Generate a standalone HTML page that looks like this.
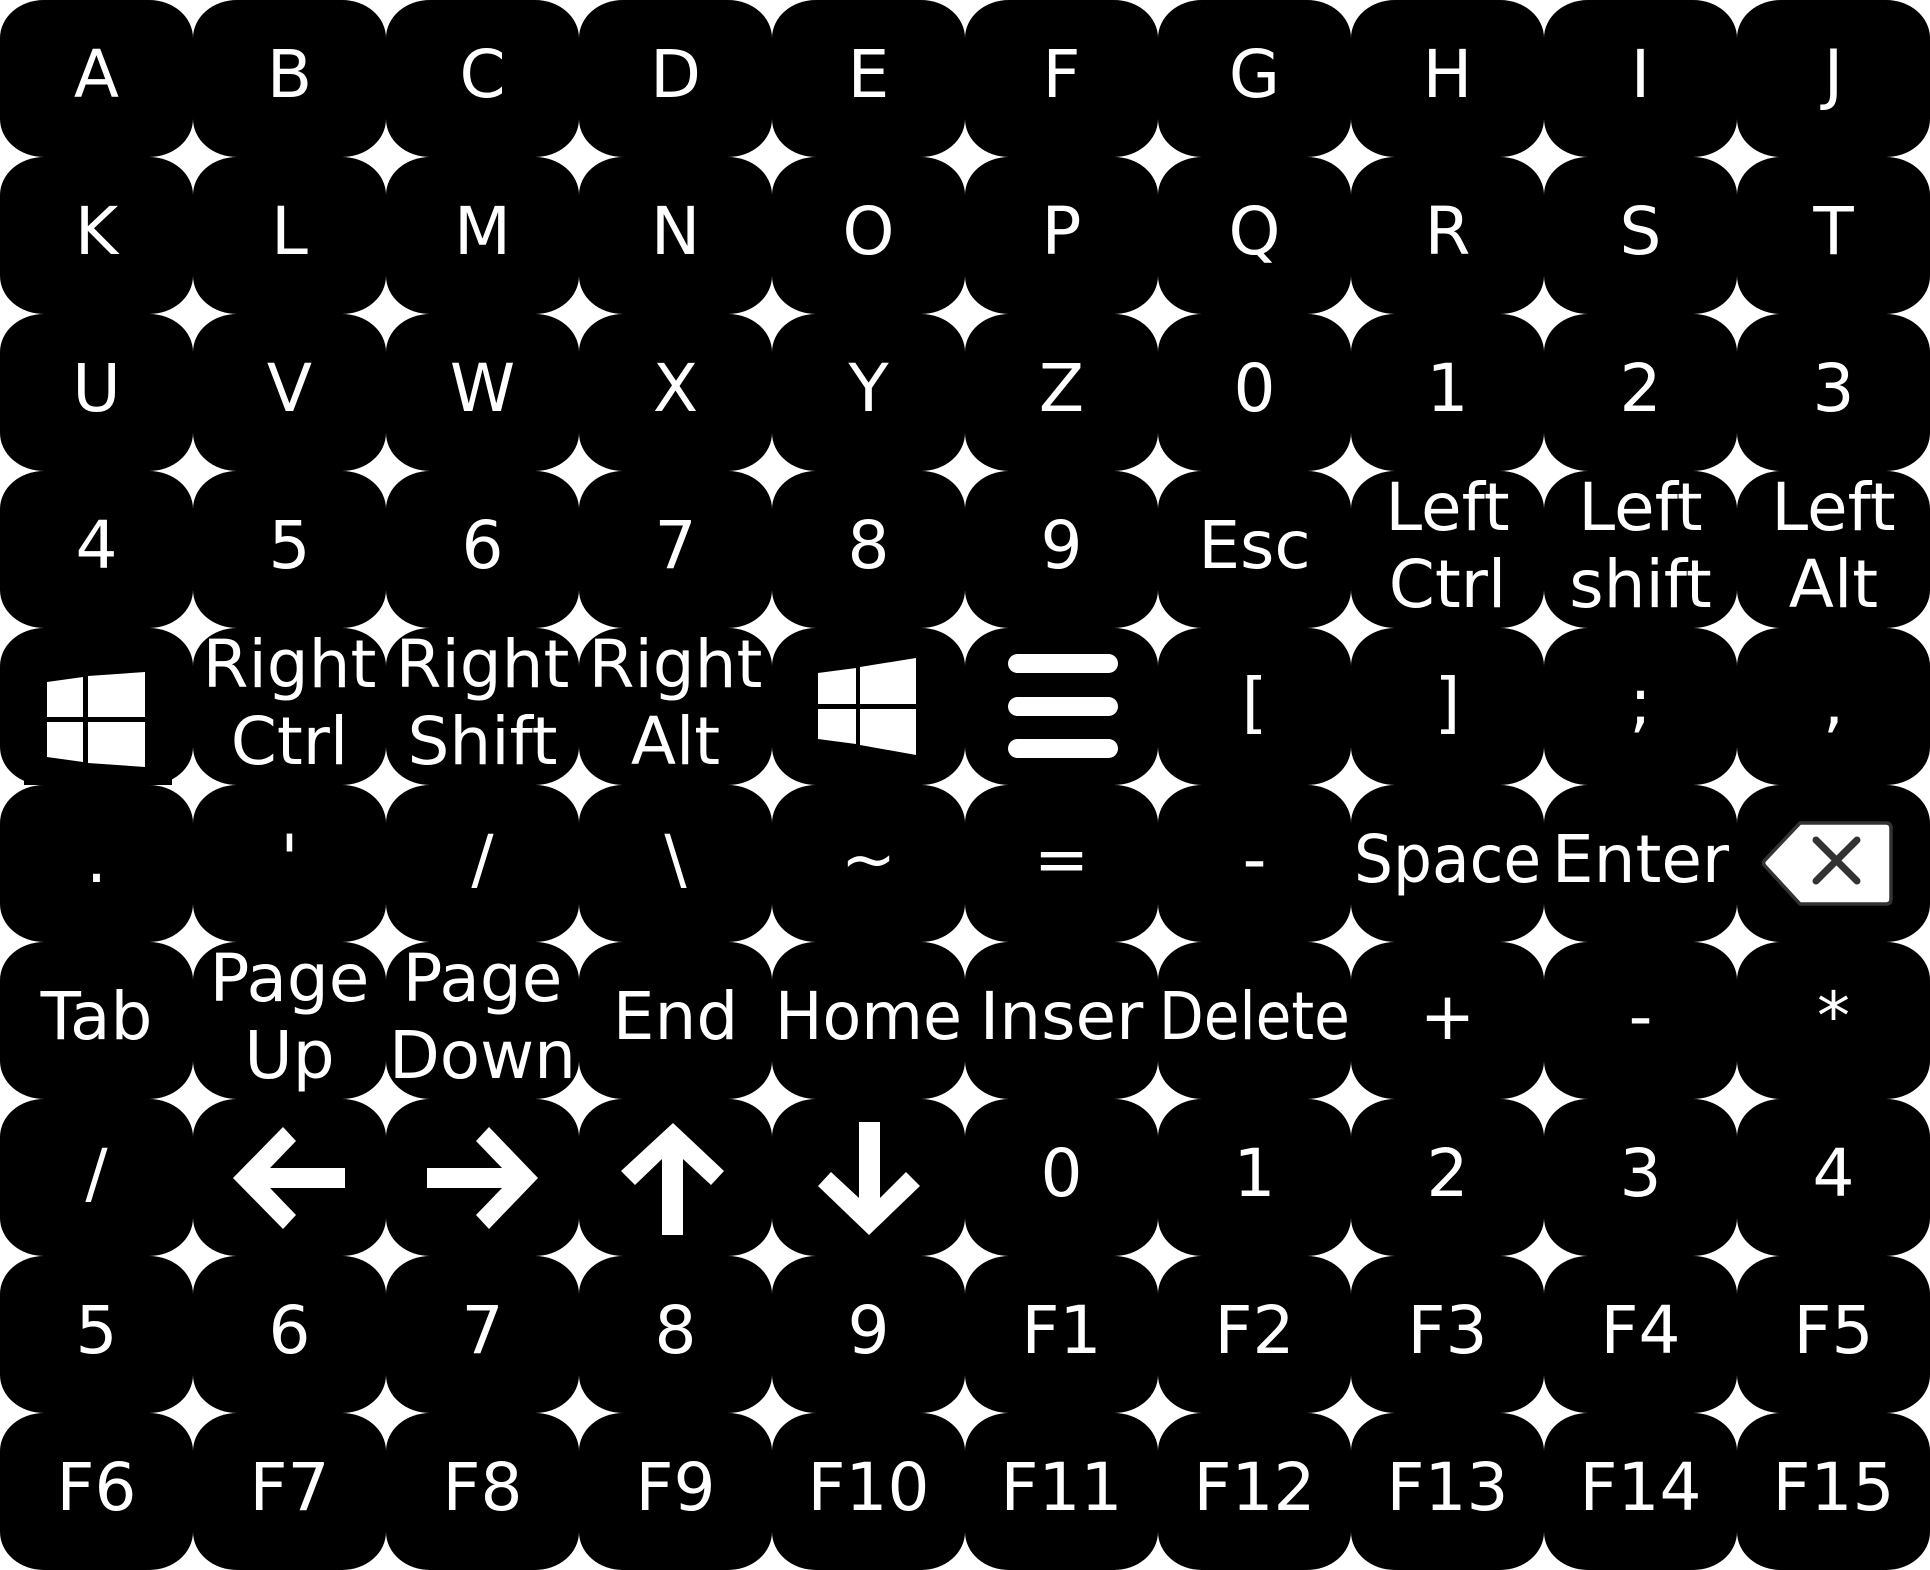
<!DOCTYPE html>
<html><head><meta charset="utf-8"><style>
html,body{margin:0;padding:0;background:#fff;}
body{width:1930px;height:1570px;position:relative;overflow:hidden;font-family:"DejaVu Sans","Liberation Sans",sans-serif;color:#fff;}
.k{position:absolute;width:193px;height:157px;background:#000;border-radius:44px/38px;}
.t{position:absolute;left:-20px;right:-20px;top:-4px;height:157px;display:flex;align-items:center;justify-content:center;text-align:center;font-size:66px;line-height:77px;white-space:nowrap;}
.t span{display:inline-block;}
svg{position:absolute;left:0;top:0;}
</style></head><body>
<div id="g">
<div class="k" style="left:0;top:0"><div class="t">A</div></div>
<div class="k" style="left:193px;top:0"><div class="t">B</div></div>
<div class="k" style="left:386px;top:0"><div class="t">C</div></div>
<div class="k" style="left:579px;top:0"><div class="t">D</div></div>
<div class="k" style="left:772px;top:0"><div class="t">E</div></div>
<div class="k" style="left:965px;top:0"><div class="t">F</div></div>
<div class="k" style="left:1158px;top:0"><div class="t">G</div></div>
<div class="k" style="left:1351px;top:0"><div class="t">H</div></div>
<div class="k" style="left:1544px;top:0"><div class="t">I</div></div>
<div class="k" style="left:1737px;top:0"><div class="t">J</div></div>
<div class="k" style="left:0;top:157px"><div class="t">K</div></div>
<div class="k" style="left:193px;top:157px"><div class="t">L</div></div>
<div class="k" style="left:386px;top:157px"><div class="t">M</div></div>
<div class="k" style="left:579px;top:157px"><div class="t">N</div></div>
<div class="k" style="left:772px;top:157px"><div class="t">O</div></div>
<div class="k" style="left:965px;top:157px"><div class="t">P</div></div>
<div class="k" style="left:1158px;top:157px"><div class="t">Q</div></div>
<div class="k" style="left:1351px;top:157px"><div class="t">R</div></div>
<div class="k" style="left:1544px;top:157px"><div class="t">S</div></div>
<div class="k" style="left:1737px;top:157px"><div class="t">T</div></div>
<div class="k" style="left:0;top:314px"><div class="t">U</div></div>
<div class="k" style="left:193px;top:314px"><div class="t">V</div></div>
<div class="k" style="left:386px;top:314px"><div class="t">W</div></div>
<div class="k" style="left:579px;top:314px"><div class="t">X</div></div>
<div class="k" style="left:772px;top:314px"><div class="t">Y</div></div>
<div class="k" style="left:965px;top:314px"><div class="t">Z</div></div>
<div class="k" style="left:1158px;top:314px"><div class="t">0</div></div>
<div class="k" style="left:1351px;top:314px"><div class="t">1</div></div>
<div class="k" style="left:1544px;top:314px"><div class="t">2</div></div>
<div class="k" style="left:1737px;top:314px"><div class="t">3</div></div>
<div class="k" style="left:0;top:471px"><div class="t">4</div></div>
<div class="k" style="left:193px;top:471px"><div class="t">5</div></div>
<div class="k" style="left:386px;top:471px"><div class="t">6</div></div>
<div class="k" style="left:579px;top:471px"><div class="t">7</div></div>
<div class="k" style="left:772px;top:471px"><div class="t">8</div></div>
<div class="k" style="left:965px;top:471px"><div class="t">9</div></div>
<div class="k" style="left:1158px;top:471px"><div class="t">Esc</div></div>
<div class="k" style="left:1351px;top:471px"><div class="t">Left<br>Ctrl</div></div>
<div class="k" style="left:1544px;top:471px"><div class="t">Left<br>shift</div></div>
<div class="k" style="left:1737px;top:471px"><div class="t">Left<br>Alt</div></div>
<div class="k" style="left:0;top:628px"></div>
<div style="position:absolute;left:24px;top:770px;width:148px;height:15px;background:#000"></div>
<div class="k" style="left:193px;top:628px"><div class="t">Right<br>Ctrl</div></div>
<div class="k" style="left:386px;top:628px"><div class="t">Right<br>Shift</div></div>
<div class="k" style="left:579px;top:628px"><div class="t">Right<br>Alt</div></div>
<div class="k" style="left:772px;top:628px"></div>
<div class="k" style="left:965px;top:628px"></div>
<div class="k" style="left:1158px;top:628px"><div class="t">[</div></div>
<div class="k" style="left:1351px;top:628px"><div class="t">]</div></div>
<div class="k" style="left:1544px;top:628px"><div class="t">;</div></div>
<div class="k" style="left:1737px;top:628px"><div class="t">,</div></div>
<div class="k" style="left:0;top:785px"><div class="t">.</div></div>
<div class="k" style="left:193px;top:785px"><div class="t">'</div></div>
<div class="k" style="left:386px;top:785px"><div class="t">/</div></div>
<div class="k" style="left:579px;top:785px"><div class="t">\</div></div>
<div class="k" style="left:772px;top:785px"><div class="t">~</div></div>
<div class="k" style="left:965px;top:785px"><div class="t">=</div></div>
<div class="k" style="left:1158px;top:785px"><div class="t">-</div></div>
<div class="k" style="left:1351px;top:785px"><div class="t"><span style="transform:scaleX(.93)">Space</span></div></div>
<div class="k" style="left:1544px;top:785px"><div class="t">Enter</div></div>
<div class="k" style="left:1737px;top:785px"></div>
<div class="k" style="left:0;top:942px"><div class="t">Tab</div></div>
<div class="k" style="left:193px;top:942px"><div class="t">Page<br>Up</div></div>
<div class="k" style="left:386px;top:942px"><div class="t">Page<br>Down</div></div>
<div class="k" style="left:579px;top:942px"><div class="t">End</div></div>
<div class="k" style="left:772px;top:942px"><div class="t"><span style="transform:scaleX(.96)">Home</span></div></div>
<div class="k" style="left:965px;top:942px"><div class="t">Inser</div></div>
<div class="k" style="left:1158px;top:942px"><div class="t"><span style="transform:scaleX(.88)">Delete</span></div></div>
<div class="k" style="left:1351px;top:942px"><div class="t">+</div></div>
<div class="k" style="left:1544px;top:942px"><div class="t">-</div></div>
<div class="k" style="left:1737px;top:942px"><div class="t">*</div></div>
<div class="k" style="left:0;top:1099px"><div class="t">/</div></div>
<div class="k" style="left:193px;top:1099px"></div>
<div class="k" style="left:386px;top:1099px"></div>
<div class="k" style="left:579px;top:1099px"></div>
<div class="k" style="left:772px;top:1099px"></div>
<div class="k" style="left:965px;top:1099px"><div class="t">0</div></div>
<div class="k" style="left:1158px;top:1099px"><div class="t">1</div></div>
<div class="k" style="left:1351px;top:1099px"><div class="t">2</div></div>
<div class="k" style="left:1544px;top:1099px"><div class="t">3</div></div>
<div class="k" style="left:1737px;top:1099px"><div class="t">4</div></div>
<div class="k" style="left:0;top:1256px"><div class="t">5</div></div>
<div class="k" style="left:193px;top:1256px"><div class="t">6</div></div>
<div class="k" style="left:386px;top:1256px"><div class="t">7</div></div>
<div class="k" style="left:579px;top:1256px"><div class="t">8</div></div>
<div class="k" style="left:772px;top:1256px"><div class="t">9</div></div>
<div class="k" style="left:965px;top:1256px"><div class="t">F1</div></div>
<div class="k" style="left:1158px;top:1256px"><div class="t">F2</div></div>
<div class="k" style="left:1351px;top:1256px"><div class="t">F3</div></div>
<div class="k" style="left:1544px;top:1256px"><div class="t">F4</div></div>
<div class="k" style="left:1737px;top:1256px"><div class="t">F5</div></div>
<div class="k" style="left:0;top:1413px"><div class="t">F6</div></div>
<div class="k" style="left:193px;top:1413px"><div class="t">F7</div></div>
<div class="k" style="left:386px;top:1413px"><div class="t">F8</div></div>
<div class="k" style="left:579px;top:1413px"><div class="t">F9</div></div>
<div class="k" style="left:772px;top:1413px"><div class="t">F10</div></div>
<div class="k" style="left:965px;top:1413px"><div class="t">F11</div></div>
<div class="k" style="left:1158px;top:1413px"><div class="t">F12</div></div>
<div class="k" style="left:1351px;top:1413px"><div class="t">F13</div></div>
<div class="k" style="left:1544px;top:1413px"><div class="t">F14</div></div>
<div class="k" style="left:1737px;top:1413px"><div class="t">F15</div></div>
</div>
<svg width="1930" height="1570" viewBox="0 0 1930 1570">
<g fill="#fff">
<polygon points="47,682 83,677 83,717 47,717"/>
<polygon points="88,676 145,672 145,717 88,717"/>
<polygon points="47,722 83,722 83,762 47,757"/>
<polygon points="88,722 145,722 145,767 88,763"/>
<polygon points="818,673 856,668 856,704 818,704"/>
<polygon points="860,667 916,658 916,704 860,704"/>
<polygon points="818,709 856,709 856,744 818,739"/>
<polygon points="860,709 916,709 916,755 860,745"/>
<rect x="1008" y="654" width="110" height="19" rx="9.5"/>
<rect x="1008" y="697" width="110" height="19" rx="9.5"/>
<rect x="1008" y="739" width="110" height="19" rx="9.5"/>
<polygon points="233,1178 283,1127 296,1141 270,1168 345,1168 345,1188 270,1188 296,1215 283,1229"/>
<polygon points="538,1178 489,1127 476,1141 502,1168 427,1168 427,1188 502,1188 476,1215 489,1229"/>
<polygon points="673,1123 724,1171 711,1185 683,1159 683,1235 662,1235 662,1159 635,1185 621,1171"/>
<polygon points="859,1122 880,1122 880,1198 906,1172 920,1186 869,1235 818,1186 831,1172 859,1198"/>
</g>
<path d="M1800,823 L1886,823 Q1891,823 1891,828 L1891,899 Q1891,904 1886,904 L1800,904 L1765,866 Q1762,863 1765,860 Z" fill="#fff" stroke="#333" stroke-width="3.5" stroke-linejoin="round"/>
<path d="M1816,840 L1857,881 M1857,840 L1816,881" stroke="#333" stroke-width="7" stroke-linecap="round"/>
</svg>
</body></html>
